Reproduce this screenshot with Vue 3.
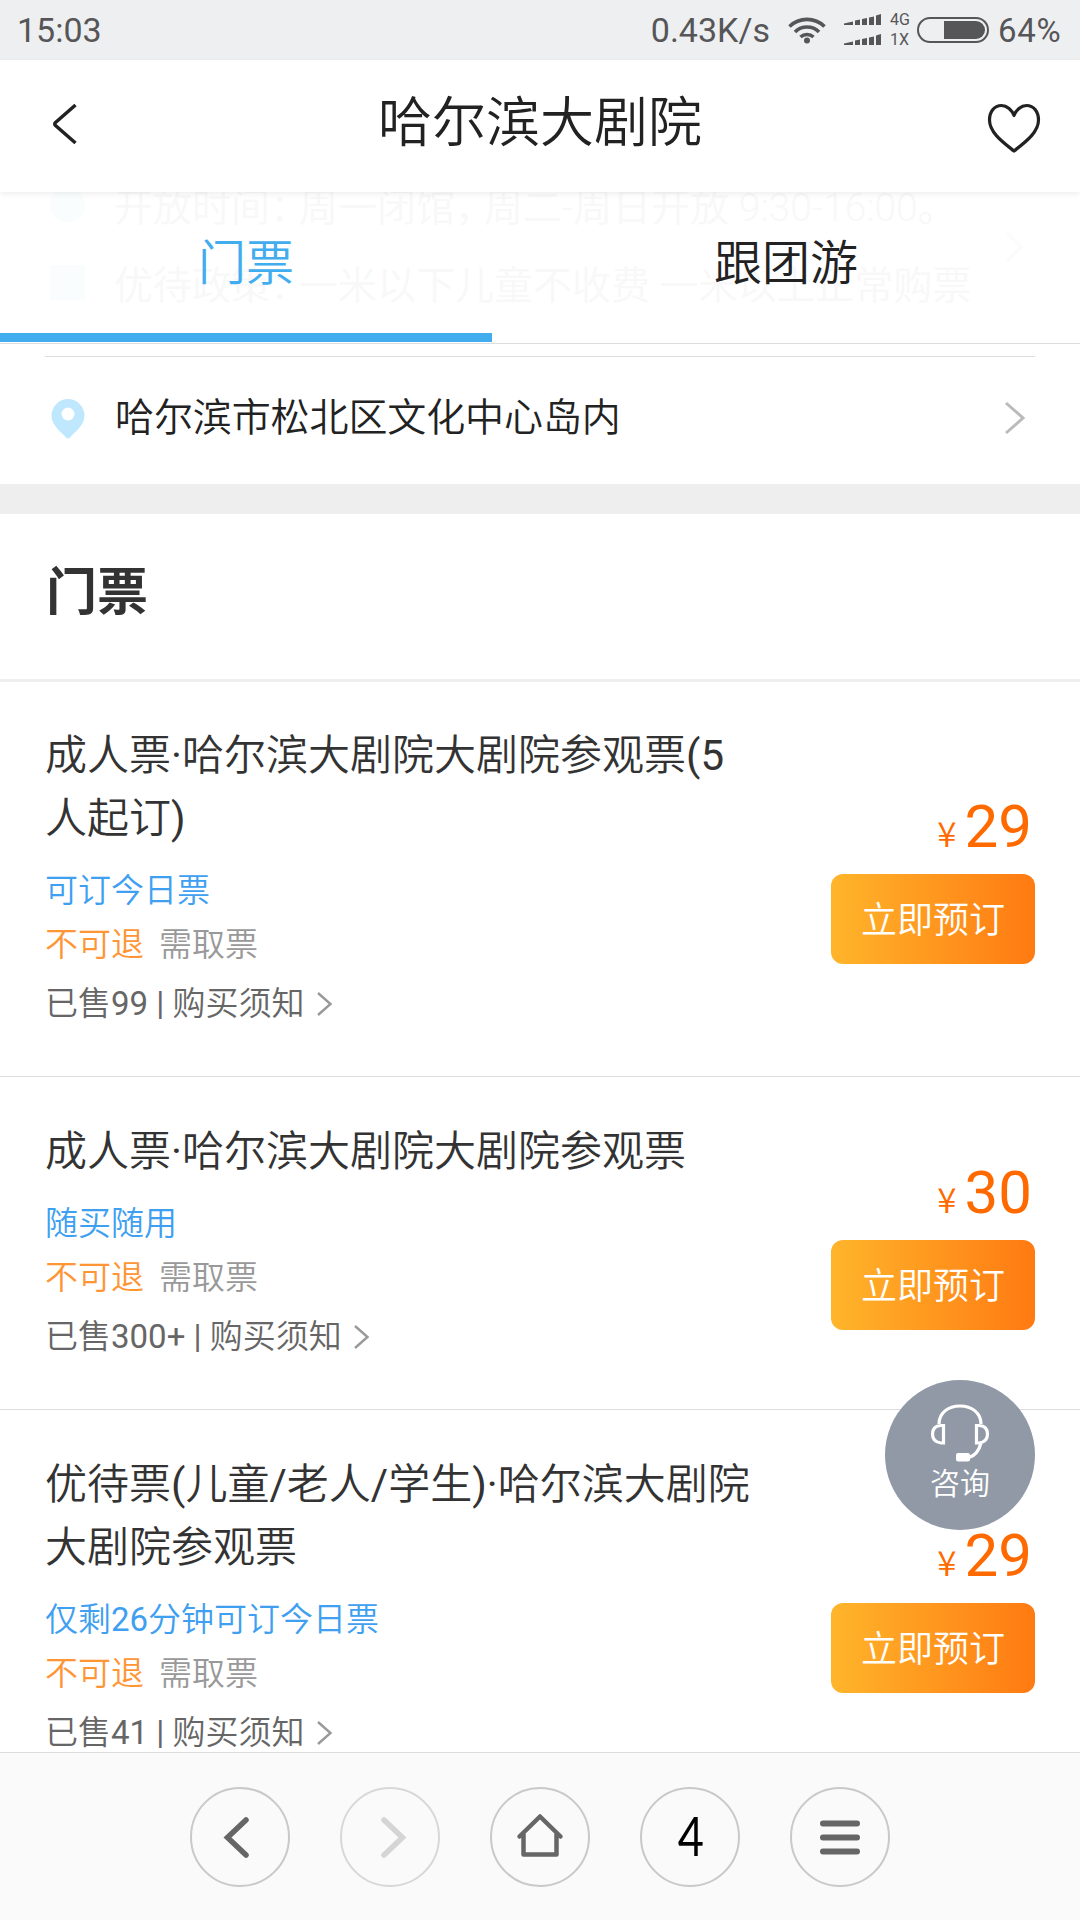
<script setup>
import { ref } from 'vue';

const tabs = ['门票', '跟团游'];
const activeTab = ref(0);

const tickets = [
  { name: '成人票·哈尔滨大剧院大剧院参观票(5人起订)', tip: '可订今日票', sold: '99', price: 29 },
  { name: '成人票·哈尔滨大剧院大剧院参观票', tip: '随买随用', sold: '300+', price: 30, single: true },
  { name: '优待票(儿童/老人/学生)·哈尔滨大剧院大剧院参观票', tip: '仅剩26分钟可订今日票', sold: '41', price: 29 }
];

// latin runs are set a little heavier than the chinese text around them
const runs = (text) =>
  text.split(/([0-9()/·+]+)/).filter(Boolean).map((s) => ({ s, latin: /^[0-9()/·+]/.test(s) }));
</script>

<template>
  <div class="page">
    <div class="status">
      <span class="clock">15:03</span>
      <span class="speed">0.43K/s</span>
      <svg class="wifi" width="38" height="28" viewBox="0 0 38 28" fill="none" stroke="#565658" stroke-width="3.6">
        <path d="M1.5 10.5A25 25 0 0 1 36.500 10.500" />
        <path d="M7 16A17 17 0 0 1 31 16" />
        <path d="M12.500 21A9.500 9.500 0 0 1 25.500 21" />
        <circle cx="19" cy="24.500" r="3" fill="#565658" stroke="none" />
      </svg>
      <svg class="signal" width="37" height="32" viewBox="0 0 37 32" fill="#565658">
        <path d="M0 11V9.500L9 7.500V11zM11 11V6.500L16 5.500V11zM18 11V5L23 4V11zM25 11V3.500L30 2.500V11zM32 11V1.500L37 0V11z" />
        <path d="M0 31V29.500L9 27.500V31zM11 31V26.500L16 25.500V31zM18 31V25L23 24V31zM25 31V23.500L30 22.500V31zM32 31V21.500L37 20V31z" />
      </svg>
      <div class="net"><span>4G</span><span>1X</span></div>
      <svg class="battery" width="72" height="26" viewBox="0 0 72 26">
        <rect x="1" y="1" width="70" height="24" rx="12" fill="none" stroke="#565658" stroke-width="2" />
        <path d="M27 4H59A9 9 0 0 1 59 22H27z" fill="#565658" />
      </svg>
      <span class="percent">64%</span>
    </div>

    <div class="header">
      <svg width="28" height="44" viewBox="0 0 28 44" fill="none" stroke="#222" stroke-width="3.5" stroke-linejoin="round">
        <path d="M25.500 3L5.500 20.500Q4 22 5.500 23.500L25.500 41" />
      </svg>
      <h1>哈尔滨大剧院</h1>
      <svg class="heart" width="54" height="50" viewBox="0 0 54 50" fill="none" stroke="#222" stroke-width="3.2" stroke-linejoin="round">
        <path d="M27 12.500C25 7 20 2.500 14.500 2.500C7 2.500 2.500 9 2.500 17C2.500 30 17 40 27 48C37 40 51.500 30 51.500 17C51.500 9 47 2.500 39.500 2.500C34 2.500 29 7 27 12.500z" />
      </svg>
    </div>

    <div class="tabs">
      <div class="under">
        <p><i class="round"></i><span>开放时间<b>：</b>周一闭馆<b>，</b>周二-周日开放 9:30-16:00。</span></p>
        <p><i></i><span>优待政策<b>：</b>一米以下儿童不收费 一米以上正常购票</span></p>
        <svg width="20" height="32" viewBox="0 0 20 32" fill="none" stroke="#fbfbfb" stroke-width="3"><path d="M3 2L17 16L3 30" /></svg>
      </div>
      <div
        v-for="(tab, i) in tabs"
        :key="tab"
        class="tab"
        :class="{ active: activeTab === i }"
        @click="activeTab = i"
      >{{ tab }}</div>
    </div>

    <div class="address">
      <svg width="34" height="40" viewBox="0 0 34 40">
        <path d="M17 0A16.500 17 0 0 0 .5 17C.5 26 10 33 15 38.500Q17 40.500 19 38.500C24 33 33.500 26 33.500 17A16.500 17 0 0 0 17 0zM17 8.500A6.500 6.500 0 1 1 17 21.500A6.500 6.500 0 1 1 17 8.500z" fill="#bfe8ff" fill-rule="evenodd" />
      </svg>
      <span>哈尔滨市松北区文化中心岛内</span>
      <svg class="more" width="22" height="34" viewBox="0 0 22 34" fill="none" stroke="#bbb" stroke-width="3">
        <path d="M2 2L19 17L2 32" />
      </svg>
    </div>

    <div class="list">
      <h2>门票</h2>
      <div v-for="(t, i) in tickets" :key="i" class="ticket">
        <div class="info">
          <div class="name"><span v-for="(r, j) in runs(t.name)" :key="j" :class="{ latin: r.latin }">{{ r.s }}</span></div>
          <div class="tip"><span v-for="(r, j) in runs(t.tip)" :key="j" :class="{ latin: r.latin }">{{ r.s }}</span></div>
          <div class="rules"><span class="refund">不可退</span><span>需取票</span></div>
          <div class="sold">
            <div>已售<span class="latin">{{ t.sold }} | </span>购买须知</div>
            <svg width="17" height="26" viewBox="0 0 17 26" fill="none" stroke="#999" stroke-width="2.4">
              <path d="M2 2L14.500 13L2 24" />
            </svg>
          </div>
        </div>
        <div class="buy" :class="{ single: t.single }">
          <div class="price"><small>¥</small>{{ t.price }}</div>
          <button>立即预订</button>
        </div>
      </div>
    </div>

    <div class="consult">
      <svg width="60" height="58" viewBox="0 0 60 58" fill="none" stroke="#fff" stroke-width="3.2">
        <path d="M9 20C9 9 18 2 30 2S51 9 51 20" />
        <path d="M13.500 21.500V39H11Q2.500 38 2.500 30T11 21.500z" />
        <path d="M46.500 21.500V39H49Q57.500 38 57.500 30T49 21.500z" />
        <path d="M51 39Q48 51 38 54" />
        <rect x="26" y="49" width="14" height="8.500" rx="2" fill="#fff" stroke="none" />
      </svg>
      <span>咨询</span>
    </div>

    <div class="toolbar">
      <div class="key">
        <svg viewBox="0 0 96 96" fill="none" stroke="#666" stroke-width="5.500" stroke-linecap="round"><path d="M54 31L35.500 48.500L54 66" /></svg>
      </div>
      <div class="key disabled">
        <svg viewBox="0 0 96 96" fill="none" stroke="#d5d5d5" stroke-width="5.500" stroke-linecap="round"><path d="M42 31L60.500 48.500L42 66" /></svg>
      </div>
      <div class="key">
        <svg viewBox="0 0 96 96" fill="none" stroke="#666" stroke-width="4.500" stroke-linecap="round" stroke-linejoin="round"><path d="M27.500 47.500L48 27.500L68.500 47.500M31.500 45V65.500H64.500V45" /></svg>
      </div>
      <div class="key count"><span>4</span></div>
      <div class="key">
        <svg viewBox="0 0 96 96" fill="none" stroke="#666" stroke-width="6" stroke-linecap="round"><path d="M31 34.500H65M31 48.500H65M31 62.500H65" /></svg>
      </div>
    </div>
  </div>
</template>

<style>
body {
  margin: 0;
}
</style>

<style scoped>
.page {
  position: relative;
  display: flex;
  flex-direction: column;
  width: 1080px;
  height: 1920px;
  overflow: hidden;
  background: #fff;
  color: #222;
  font-family: Roboto, "Noto Sans CJK SC", sans-serif;
  font-weight: 350;
}

.page * {
  box-sizing: border-box;
}

svg {
  display: block;
  flex: none;
}

.latin {
  font-weight: 400;
  white-space: pre-wrap;
}

.status {
  display: flex;
  align-items: center;
  flex: none;
  height: 60px;
  padding: 0 18px 0 17px;
  background: #eeeff1;
  color: #565658;
  font-size: 34px;
  font-weight: 400;
  white-space: nowrap;
}

.clock {
  margin-right: auto;
}

.wifi {
  margin-left: 18px;
}

.signal {
  margin-left: 18px;
}

.net {
  display: flex;
  flex-direction: column;
  width: 27px;
  margin-left: 9px;
  font-size: 16px;
  line-height: 20px;
}

.percent {
  width: 64px;
  margin-left: 9px;
  font-size: 33px;
  letter-spacing: 0.7px;
}

.header {
  position: relative;
  z-index: 2;
  display: flex;
  align-items: center;
  justify-content: space-between;
  flex: none;
  height: 132px;
  padding: 0 39px 4px 50px;
  background: #fff;
  box-shadow: 0 2px 6px rgba(0, 0, 0, 0.07);
}

.header h1 {
  margin: 0 0 0 15px;
  font-size: 54px;
  font-weight: 350;
  line-height: 80px;
}

.heart {
  margin-top: 8px;
}

.tabs {
  position: relative;
  display: flex;
  flex: none;
  height: 152px;
  border-bottom: 1px solid #ddd;
}

.tab {
  position: relative;
  width: 588px;
  height: 150px;
  font-size: 48px;
  line-height: 143px;
  text-align: center;
}

.tab:nth-child(2) {
  width: 492px;
}

.tab.active {
  border-bottom: 9px solid #42adee;
  color: #42adee;
}

/* page content showing faintly through the sticky tabs */
.under {
  position: absolute;
  inset: 0;
  overflow: hidden;
  color: #f8f8f8;
  font-size: 39px;
}

.under p {
  display: flex;
  align-items: center;
  height: 78px;
  margin: 0;
  padding-left: 50px;
  white-space: nowrap;
}

.under p:first-child {
  margin-top: -27px;
}

.under i {
  width: 35px;
  height: 35px;
  margin-right: 29px;
  background: #fafdfd;
}

.under b {
  font-weight: inherit;
  letter-spacing: -10px;
}

.under .round {
  border-radius: 50%;
}

.under svg {
  position: absolute;
  right: 56px;
  top: 39px;
}

.address {
  display: flex;
  align-items: center;
  flex: none;
  height: 128px;
  margin: 12px 45px 0;
  padding: 0 9px 3px 6px;
  border-top: 1px solid #ddd;
  font-size: 39px;
}

.address span {
  flex: 1;
  margin: -11px 0 0 30px;
  letter-spacing: -0.1px;
}

.address .more {
  margin-top: -3px;
}

.list {
  flex: 1;
  min-height: 0;
  overflow: hidden;
  border-top: 30px solid #eee;
}

.list h2 {
  height: 168px;
  margin: 0;
  padding-left: 46px;
  border-bottom: 3px solid #eee;
  color: #333;
  font-size: 51px;
  font-weight: 700;
  line-height: 158px;
}

.ticket {
  display: flex;
  justify-content: space-between;
  padding: 42px 45px 45px;
  border-bottom: 1px solid #ddd;
  color: #333;
}

.ticket + .ticket {
  padding-top: 43px;
}

.name {
  width: 710px;
  font-size: 42px;
  line-height: 63px;
  word-break: break-all;
}

.tip,
.rules,
.sold {
  font-size: 33px;
  line-height: 54px;
}

.tip {
  margin-top: 14px;
  color: #3f9ff0;
}

.rules {
  color: #999;
}

.refund {
  margin-right: 15px;
  color: #ff9636;
}

.sold {
  display: flex;
  align-items: center;
  gap: 11px;
  margin-top: 5px;
  color: #666;
}

.buy {
  width: 204px;
  padding-top: 73px;
}

.buy.single {
  padding-top: 43px;
}

.price {
  height: 77px;
  padding-right: 3px;
  color: #ff6a00;
  font-size: 60px;
  font-weight: 400;
  line-height: 59px;
  text-align: right;
}

.price small {
  margin-right: 8px;
  font-family: "Noto Sans CJK SC", sans-serif;
  font-size: 35px;
  font-weight: 350;
  line-height: 1;
}

button {
  display: block;
  width: 204px;
  height: 90px;
  padding: 0 0 5px;
  border: 0;
  border-radius: 12px;
  background: linear-gradient(90deg, #ffb52b, #ff7a12);
  color: #fff;
  font: inherit;
  font-size: 36px;
}

.consult {
  position: absolute;
  top: 1380px;
  right: 45px;
  display: flex;
  flex-direction: column;
  align-items: center;
  width: 150px;
  height: 150px;
  padding-top: 24px;
  border-radius: 50%;
  background: rgba(138, 147, 160, 0.95);
  color: #fff;
  font-size: 30px;
  line-height: 43px;
}

.toolbar {
  display: flex;
  justify-content: center;
  gap: 50px;
  flex: none;
  height: 168px;
  padding-top: 34px;
  border-top: 1px solid #ddd;
  background: #fafafa;
}

.key {
  width: 100px;
  height: 100px;
  border: 2px solid #c9c9c9;
  border-radius: 50%;
}

.key.disabled {
  border-color: #d8d8d8;
}

.count {
  padding-left: 2px;
  color: #000;
  font-family: Lato, sans-serif;
  font-size: 55px;
  font-weight: 400;
  line-height: 93px;
  text-align: center;
}

.count span {
  display: inline-block;
  transform: scaleX(0.82);
}
</style>
